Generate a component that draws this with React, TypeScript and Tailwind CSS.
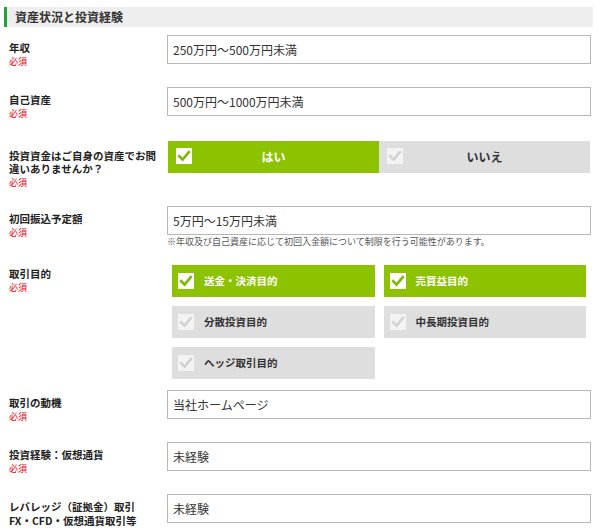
import * as React from 'react'

const GREEN = 'bg-[#8cc200]'

function Check({ on }: { on: boolean }) {
  return (
    <span
      className={
        'flex h-4 w-4 shrink-0 items-center justify-center ' + (on ? 'bg-white' : 'bg-[#f3f3f3]')
      }
    >
      <svg viewBox="0 0 16 16" className="h-4 w-4">
        <polyline
          points="3.2,8.2 6.6,11.6 12.8,4.2"
          fill="none"
          stroke={on ? '#7fb800' : '#d2d2d2'}
          strokeWidth="2.6"
          strokeLinecap="square"
        />
      </svg>
    </span>
  )
}

function Label({ text, pt = 'pt-[6px]' }: { text: React.ReactNode; pt?: string }) {
  return (
    <div className={'w-[158px] shrink-0 pr-2 ' + pt}>
      <div className="text-[10.5px] font-bold leading-[13px] text-[#222]">{text}</div>
      <div className="text-[9px] leading-[15px] text-[#e60012]">必須</div>
    </div>
  )
}

function Input({ value }: { value: string }) {
  return (
    <div className="flex h-[29px] w-[424px] shrink-0 items-center border border-[#b8b8b8] bg-white pl-[5px] text-[12px] text-[#333]">
      {value}
    </div>
  )
}

function Option({ label, on }: { label: string; on: boolean }) {
  return (
    <div
      className={
        'flex h-[32px] items-center gap-[10px] pl-[6px] text-[10.5px] font-bold ' +
        (on ? GREEN + ' text-white' : 'bg-[#dedede] text-[#333]')
      }
    >
      <Check on={on} />
      <span>{label}</span>
    </div>
  )
}

export default function App() {
  return (
    <div
      className="h-[530px] w-[600px] overflow-hidden bg-white pt-[7px]"
      style={{ fontFamily: '"Noto Sans CJK JP", "Noto Sans", sans-serif' }}
    >
      {/* section header */}
      <div className="ml-[4px] flex h-[20px] w-[589px] items-center border-l-[3px] border-[#22a33a] bg-[#eeeeee] pl-[8px] text-[12px] font-bold text-[#333]">
        資産状況と投資経験
      </div>

      <div className="mt-[8px] flex h-[29px] items-start pl-[9px]">
        <Label text="年収" />
        <Input value="250万円～500万円未満" />
      </div>

      <div className="mt-[23px] flex h-[29px] items-start pl-[9px]">
        <Label text="自己資産" />
        <Input value="500万円～1000万円未満" />
      </div>

      <div className="mt-[25px] flex h-[32px] items-start pl-[9px]">
        <Label text="投資資金はご自身の資産でお間違いありませんか？" pt="pt-[8px]" />
        <div className="w-[424px] shrink-0 px-[1px]">
          <div className="grid grid-cols-2">
            <div className={'relative flex h-[32px] items-center justify-center ' + GREEN}>
              <span className="absolute left-[8px] top-[7px]">
                <Check on />
              </span>
              <span className="text-[12px] font-bold text-white">はい</span>
            </div>
            <div className="relative flex h-[32px] items-center justify-center bg-[#dedede]">
              <span className="absolute left-[8px] top-[7px]">
                <Check on={false} />
              </span>
              <span className="text-[12px] font-bold text-[#333]">いいえ</span>
            </div>
          </div>
        </div>
      </div>

      <div className="mt-[33px] flex h-[42px] items-start pl-[9px]">
        <Label text="初回振込予定額" />
        <div>
          <Input value="5万円～15万円未満" />
          <div className="mt-[1px] text-[9px] leading-[12px] text-[#555]">
            ※年収及び自己資産に応じて初回入金額について制限を行う可能性があります。
          </div>
        </div>
      </div>

      <div className="mt-[17px] flex items-start pl-[9px]">
        <Label text="取引目的" pt="pt-[2px]" />
        <div className="ml-[5px] grid w-[414px] grid-cols-2 gap-x-[9px] gap-y-[9px]">
          <Option label="送金・決済目的" on />
          <Option label="売買益目的" on />
          <Option label="分散投資目的" on={false} />
          <Option label="中長期投資目的" on={false} />
          <Option label="ヘッジ取引目的" on={false} />
        </div>
      </div>

      <div className="mt-[11px] flex h-[29px] items-start pl-[9px]">
        <Label text="取引の動機" />
        <Input value="当社ホームページ" />
      </div>

      <div className="mt-[23px] flex h-[29px] items-start pl-[9px]">
        <Label text="投資経験：仮想通貨" />
        <Input value="未経験" />
      </div>

      <div className="mt-[23px] flex h-[29px] items-start pl-[9px]">
        <div className="w-[158px] shrink-0 pt-[6px] text-[10.5px] font-bold leading-[14px] text-[#222]">
          レバレッジ（証拠金）取引
          <br />
          FX・CFD・仮想通貨取引等
        </div>
        <Input value="未経験" />
      </div>
    </div>
  )
}
